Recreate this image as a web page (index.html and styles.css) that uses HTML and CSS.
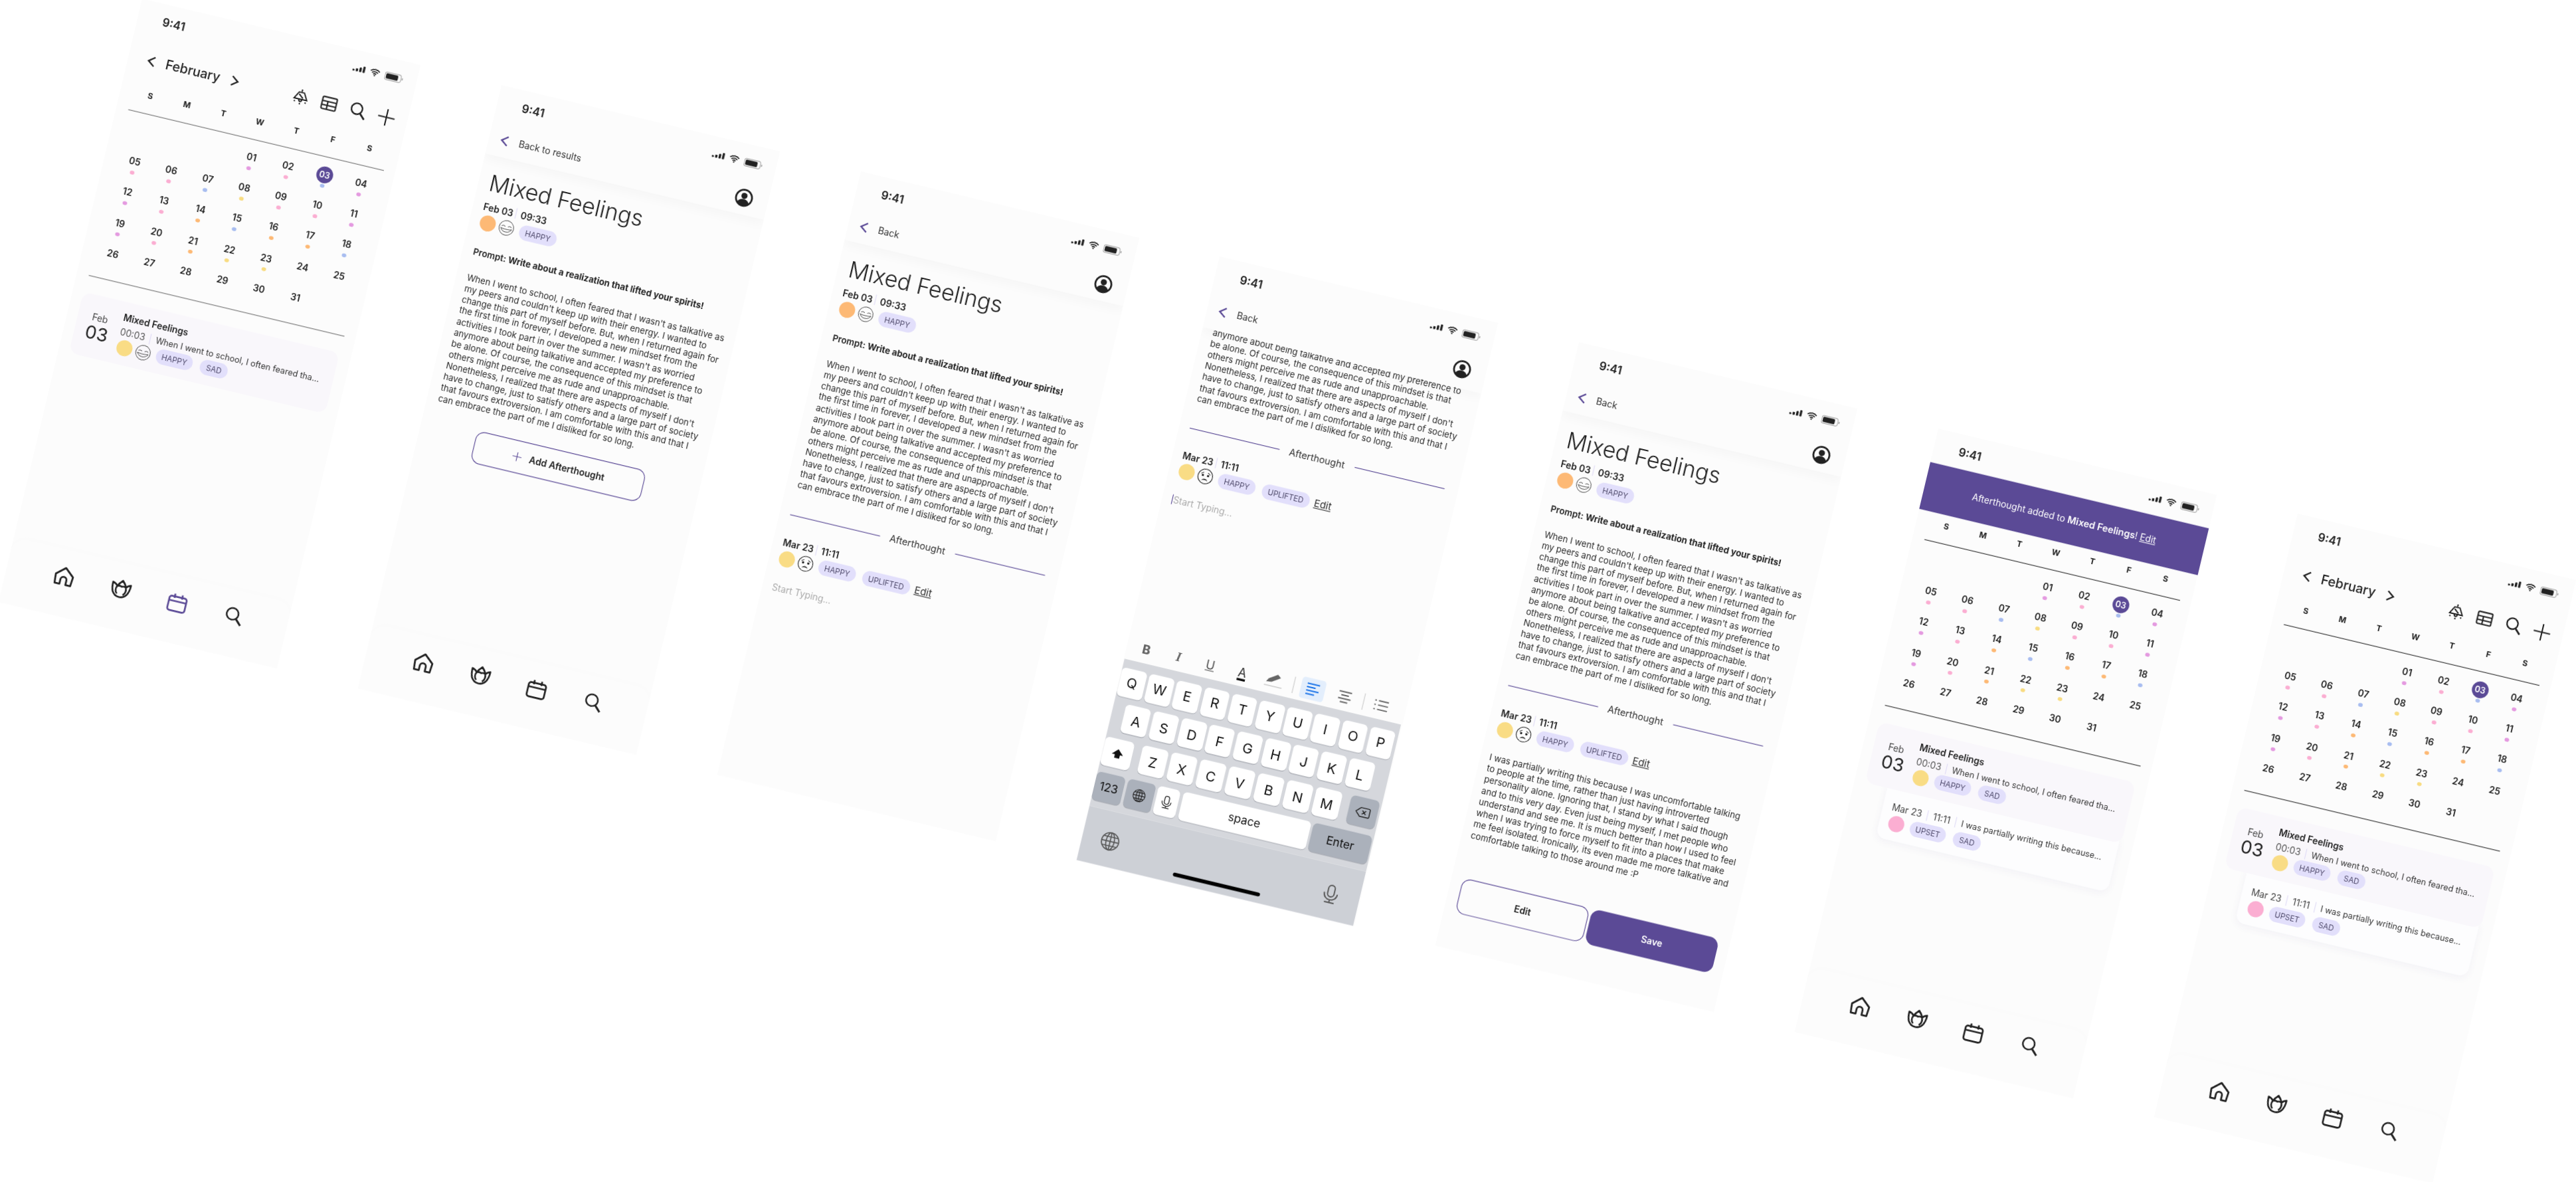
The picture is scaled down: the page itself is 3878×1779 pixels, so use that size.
FILE: index.html
```html
<!DOCTYPE html>
<html lang="en">
<head>
<meta charset="utf-8">
<title>Mixed Feelings journal screens</title>
<link rel="stylesheet" href="styles.css">
</head>
<body>
<svg class="defs" width="0" height="0" aria-hidden="true">
  <symbol id="i-signal" viewBox="0 0 17 10"><rect x="0" y="6.4" width="3" height="2.6" rx="1"/><rect x="4.6" y="5" width="3" height="4" rx="1"/><rect x="9.2" y="2.8" width="3" height="6.2" rx="1"/><rect x="13.8" y="0.6" width="3" height="8.4" rx="1"/></symbol>
  <symbol id="i-wifi" viewBox="0 0 15 11"><path d="M1 3.8a9.4 9.4 0 0 1 13 0M3.2 6a6.2 6.2 0 0 1 8.6 0M5.4 8.1a3 3 0 0 1 4.2 0" fill="none" stroke="currentColor" stroke-width="1.5"/><circle cx="7.5" cy="9.8" r="1"/></symbol>
  <symbol id="i-batt" viewBox="0 0 25 11"><rect x=".5" y=".5" width="21.5" height="10" rx="3" fill="none" stroke="#aaa" stroke-width="1"/><rect x="2" y="2" width="16" height="7" rx="1.6"/><rect x="23" y="4" width="1.5" height="3" rx=".7" fill="#aaa"/></symbol>
  <symbol id="i-left" viewBox="0 0 12 16"><path d="M10 2 2 8l8 6" fill="none" stroke="currentColor" stroke-width="2"/></symbol>
  <symbol id="i-right" viewBox="0 0 12 16"><path d="M2 2l8 6-8 6" fill="none" stroke="currentColor" stroke-width="2"/></symbol>
  <symbol id="i-bell" viewBox="0 0 24 24"><path d="M12 2v3M8.5 6h7l5 9H3.500zM9 8.500l6 5M10 15a2 3 0 0 0 4 0" fill="none" stroke="currentColor" stroke-width="1.700"/><path d="M4 19l1.500-1M20 19l-1.500-1M12 22v-2" stroke="currentColor" stroke-width="1.700"/></symbol>
  <symbol id="i-table" viewBox="0 0 24 24"><rect x="2.500" y="4" width="19" height="16" rx="1.500" fill="none" stroke="currentColor" stroke-width="1.800"/><path d="M2.500 9.500h19M2.500 14.800h19M10 9.500V20" fill="none" stroke="currentColor" stroke-width="1.800"/></symbol>
  <symbol id="i-search" viewBox="0 0 24 24"><circle cx="10" cy="10" r="7.200" fill="none" stroke="currentColor" stroke-width="2"/><path d="M15.400 15.400 22 22" fill="none" stroke="currentColor" stroke-width="2.400"/></symbol>
  <symbol id="i-plus" viewBox="0 0 24 24"><path d="M12 1v22M1 12h22" fill="none" stroke="currentColor" stroke-width="1.800"/></symbol>
  <symbol id="i-profile" viewBox="0 0 24 24"><circle cx="12" cy="12" r="10.500" fill="none" stroke="currentColor" stroke-width="2.400"/><circle cx="12" cy="9.500" r="4"/><path d="M4 19c2-4 5-5.200 8-5.200s6 1.200 8 5.200c-2 2.400-5 3.500-8 3.500s-6-1.100-8-3.500z"/></symbol>
  <symbol id="i-home" viewBox="0 0 28 28"><path d="M2.500 13 14 3l11.500 10-1 12h-6.500v-6a4 4 0 0 0-8 0v6H3.500z" fill="none" stroke="currentColor" stroke-width="2.400" stroke-linejoin="round"/></symbol>
  <symbol id="i-tulip" viewBox="0 0 28 28"><path d="M2 6c3 .5 5 2 6.500 4C10 7 12 4.500 14.500 2 17 4.500 19 7 20 10c1.500-2 3.500-3.500 6-4 0 5-.5 9-3 13-2 3-5 5-9 5-5 0-8-2.500-10-6C2.500 14.500 2 10 2 6z" fill="none" stroke="currentColor" stroke-width="2.300" stroke-linejoin="round"/><path d="M8.500 10C6.500 14 7.500 18 10 20M20 10c1.500 4 .5 8-2 10.500M8.500 10C11 9 13 9 14.500 10c2-1 4-1 5.500 0" fill="none" stroke="currentColor" stroke-width="2.300"/></symbol>
  <symbol id="i-cal" viewBox="0 0 28 28"><rect x="2.500" y="6" width="23" height="19" rx="3" fill="none" stroke="currentColor" stroke-width="2.300"/><path d="M2.500 12h23M9 2.500V8M19 2.500V8" fill="none" stroke="currentColor" stroke-width="2.300"/></symbol>
  <symbol id="i-smile" viewBox="0 0 24 24"><circle cx="12" cy="12" r="11" fill="none" stroke="currentColor" stroke-width=".8"/><path d="M4.500 10q2.800-2.200 5.600 0M13.900 10q2.800-2.200 5.600 0M3.800 13c2.200 7 14.200 7 16.400 0-3 1.500-13.400 1.500-16.400 0z" fill="none" stroke="currentColor" stroke-width=".8"/></symbol>
  <symbol id="i-sad" viewBox="0 0 24 24"><circle cx="12" cy="12" r="11" fill="none" stroke="currentColor" stroke-width="1"/><path d="M5 8.500 9 6M19 8.500 15 6" fill="none" stroke="currentColor" stroke-width="1"/><circle cx="8" cy="10.500" r="1.700"/><circle cx="16" cy="10.500" r="1.700"/><path d="M7.500 18.500c1.500-4 7.500-4 9 0-3-1.500-6-1.500-9 0z"/></symbol>
  <symbol id="i-globe" viewBox="0 0 24 24"><g fill="none" stroke="currentColor" stroke-width="1.300"><circle cx="12" cy="12" r="10.500"/><ellipse cx="12" cy="12" rx="5" ry="10.500"/><path d="M12 1.500v21M1.500 12h21M3 6.500h18M3 17.500h18"/></g></symbol>
  <symbol id="i-mic" viewBox="0 0 24 24"><g fill="none" stroke="currentColor" stroke-width="1.500"><rect x="8" y="1.500" width="8" height="14" rx="4"/><path d="M4 11c0 11 16 11 16 0M12 19v3.500M6 22.500h12"/></g></symbol>
  <symbol id="i-shift" viewBox="0 0 24 24"><path d="M12 4 2 14h5.500v6h9v-6H22z"/></symbol>
  <symbol id="i-back" viewBox="0 0 24 18"><path d="M8 2h13a2 2 0 0 1 2 2v10a2 2 0 0 1-2 2H8l-7-7zM11 6l6 6M17 6l-6 6" fill="none" stroke="currentColor" stroke-width="1.500"/></symbol>
  <symbol id="i-pen" viewBox="0 0 28 22"><path d="M3 15l3-5L18 2l5 4-12 8z"/><path d="M1 20h26" stroke="#ccc" stroke-width="1.500"/></symbol>
  <symbol id="i-alignl" viewBox="0 0 24 24"><path d="M2 4h20M2 9.500h14M2 15h20M2 20.500h14" fill="none" stroke="currentColor" stroke-width="2"/></symbol>
  <symbol id="i-alignc" viewBox="0 0 24 24"><path d="M2 4h20M6 9.500h12M2 15h20M6 20.500h12" fill="none" stroke="currentColor" stroke-width="2"/></symbol>
  <symbol id="i-list" viewBox="0 0 24 24"><path d="M7 5h16M7 12h16M7 19h16M1 5h2.500M1 12h2.500M1 19h2.500" fill="none" stroke="currentColor" stroke-width="2"/></symbol>
</svg>

<main class="canvas">

<!-- Screen 1: calendar -->
<section class="phone p1">
  <div class="status"><span class="time">9:41</span><div class="sys"><svg class="s-signal"><use href="#i-signal"/></svg><svg class="s-wifi"><use href="#i-wifi"/></svg><svg class="s-batt"><use href="#i-batt"/></svg></div></div>
  <div class="cal-head">
    <svg class="chev"><use href="#i-left"/></svg><span class="month">February</span><svg class="chev chev-r"><use href="#i-right"/></svg>
    <div class="tools"><svg class="tool"><use href="#i-bell"/></svg><svg class="tool"><use href="#i-table"/></svg><svg class="tool"><use href="#i-search"/></svg><svg class="tool"><use href="#i-plus"/></svg></div>
  </div>
  <div class="days"><span>S</span><span>M</span><span>T</span><span>W</span><span>T</span><span>F</span><span>S</span></div>
  <div class="dates">
    <div></div><div></div><div></div>
    <div class="d"><b>01</b><i class="dot m"></i></div><div class="d"><b>02</b><i class="dot p"></i></div><div class="d today"><b>03</b><i class="dot bl"></i></div><div class="d"><b>04</b><i class="dot m"></i></div>
    <div class="d"><b>05</b><i class="dot p"></i></div><div class="d"><b>06</b><i class="dot p"></i></div><div class="d"><b>07</b><i class="dot bl"></i></div><div class="d"><b>08</b><i class="dot y"></i></div><div class="d"><b>09</b><i class="dot p"></i></div><div class="d"><b>10</b><i class="dot p"></i></div><div class="d"><b>11</b><i class="dot m"></i></div>
    <div class="d"><b>12</b><i class="dot m"></i></div><div class="d"><b>13</b><i class="dot p"></i></div><div class="d"><b>14</b><i class="dot o"></i></div><div class="d"><b>15</b><i class="dot bl"></i></div><div class="d"><b>16</b><i class="dot o"></i></div><div class="d"><b>17</b><i class="dot o"></i></div><div class="d"><b>18</b><i class="dot bl"></i></div>
    <div class="d"><b>19</b><i class="dot m"></i></div><div class="d"><b>20</b><i class="dot p"></i></div><div class="d"><b>21</b><i class="dot o"></i></div><div class="d"><b>22</b><i class="dot y"></i></div><div class="d"><b>23</b><i class="dot y"></i></div><div class="d"><b>24</b></div><div class="d"><b>25</b></div>
    <div class="d"><b>26</b></div><div class="d"><b>27</b></div><div class="d"><b>28</b></div><div class="d"><b>29</b></div><div class="d"><b>30</b></div><div class="d"><b>31</b></div>
  </div>
  <article class="card">
    <div class="card-date"><span class="cd-mon">Feb</span><span class="cd-day">03</span></div>
    <div class="card-body">
      <div class="card-title">Mixed Feelings</div>
      <div class="card-meta"><span class="cm-time">00:03</span><i class="sep"></i><span class="snippet">When I went to school, I often feared tha...</span></div>
      <div class="card-tags"><i class="mood yellow"></i><svg class="face"><use href="#i-smile"/></svg><span class="chip chip-first">HAPPY</span><span class="chip">SAD</span></div>
    </div>
  </article>
  <nav class="nav"><div class="ni"><svg><use href="#i-home"/></svg></div><div class="ni"><svg><use href="#i-tulip"/></svg></div><div class="ni active"><svg><use href="#i-cal"/></svg></div><div class="ni"><svg class="ni-s"><use href="#i-search"/></svg></div></nav>
</section>

<!-- Screen 2: entry -->
<section class="phone p2">
  <header class="top">
    <div class="status"><span class="time">9:41</span><div class="sys"><svg class="s-signal"><use href="#i-signal"/></svg><svg class="s-wifi"><use href="#i-wifi"/></svg><svg class="s-batt"><use href="#i-batt"/></svg></div></div>
    <div class="backrow"><svg class="chev purple"><use href="#i-left"/></svg><span class="backtxt">Back to results</span><svg class="profile"><use href="#i-profile"/></svg></div>
  </header>
  <h1 class="title">Mixed Feelings</h1>
  <div class="meta"><span class="md">Feb 03</span><i class="sep"></i><span class="mt">09:33</span></div>
  <div class="moods"><i class="mood orange"></i><svg class="face"><use href="#i-smile"/></svg><span class="chip chip-first">HAPPY</span></div>
  <p class="prompt">Prompt: <b>Write about a realization that lifted your spirits!</b></p>
  <p class="body">When I went to school, I often feared that I wasn't as talkative as<br>my peers and couldn't keep up with their energy. I wanted to<br>change this part of myself before. But, when I returned again for<br>the first time in forever, I developed a new mindset from the<br>activities I took part in over the summer. I wasn't as worried<br>anymore about being talkative and accepted my preference to<br>be alone. Of course, the consequence of this mindset is that<br>others might perceive me as rude and unapproachable.<br>Nonetheless, I realized that there are aspects of myself I don't<br>have to change, just to satisfy others and a large part of society<br>that favours extroversion. I am comfortable with this and that I<br>can embrace the part of me I disliked for so long.</p>
  <button class="add"><svg class="add-plus"><use href="#i-plus"/></svg><span>Add Afterthought</span></button>
  <nav class="nav"><div class="ni"><svg><use href="#i-home"/></svg></div><div class="ni"><svg><use href="#i-tulip"/></svg></div><div class="ni"><svg><use href="#i-cal"/></svg></div><div class="ni"><svg class="ni-s"><use href="#i-search"/></svg></div></nav>
</section>

<!-- Screen 3: afterthought, empty -->
<section class="phone p3">
  <header class="top">
    <div class="status"><span class="time">9:41</span><div class="sys"><svg class="s-signal"><use href="#i-signal"/></svg><svg class="s-wifi"><use href="#i-wifi"/></svg><svg class="s-batt"><use href="#i-batt"/></svg></div></div>
    <div class="backrow"><svg class="chev purple"><use href="#i-left"/></svg><span class="backtxt">Back</span><svg class="profile"><use href="#i-profile"/></svg></div>
  </header>
  <h1 class="title">Mixed Feelings</h1>
  <div class="meta"><span class="md">Feb 03</span><i class="sep"></i><span class="mt">09:33</span></div>
  <div class="moods"><i class="mood orange"></i><svg class="face"><use href="#i-smile"/></svg><span class="chip chip-first">HAPPY</span></div>
  <p class="prompt">Prompt: <b>Write about a realization that lifted your spirits!</b></p>
  <p class="body">When I went to school, I often feared that I wasn't as talkative as<br>my peers and couldn't keep up with their energy. I wanted to<br>change this part of myself before. But, when I returned again for<br>the first time in forever, I developed a new mindset from the<br>activities I took part in over the summer. I wasn't as worried<br>anymore about being talkative and accepted my preference to<br>be alone. Of course, the consequence of this mindset is that<br>others might perceive me as rude and unapproachable.<br>Nonetheless, I realized that there are aspects of myself I don't<br>have to change, just to satisfy others and a large part of society<br>that favours extroversion. I am comfortable with this and that I<br>can embrace the part of me I disliked for so long.</p>
  <div class="after"><i></i><span>Afterthought</span><i></i></div>
  <div class="meta meta-after"><span class="md">Mar 23</span><i class="sep"></i><span class="mt">11:11</span></div>
  <div class="moods moods-after"><i class="mood yellow"></i><svg class="face"><use href="#i-sad"/></svg><span class="chip chip-first">HAPPY</span><span class="chip chip-a">UPLIFTED</span><a class="edit">Edit</a></div>
  <p class="typing">Start Typing...</p>
</section>

<!-- Screen 4: afterthought with keyboard -->
<section class="phone p4">
  <header class="top">
    <div class="status"><span class="time">9:41</span><div class="sys"><svg class="s-signal"><use href="#i-signal"/></svg><svg class="s-wifi"><use href="#i-wifi"/></svg><svg class="s-batt"><use href="#i-batt"/></svg></div></div>
    <div class="backrow"><svg class="chev purple"><use href="#i-left"/></svg><span class="backtxt">Back</span><svg class="profile"><use href="#i-profile"/></svg></div>
  </header>
  <p class="body body-scrolled">anymore about being talkative and accepted my preference to<br>be alone. Of course, the consequence of this mindset is that<br>others might perceive me as rude and unapproachable.<br>Nonetheless, I realized that there are aspects of myself I don't<br>have to change, just to satisfy others and a large part of society<br>that favours extroversion. I am comfortable with this and that I<br>can embrace the part of me I disliked for so long.</p>
  <div class="after"><i></i><span>Afterthought</span><i></i></div>
  <div class="meta meta-after"><span class="md">Mar 23</span><i class="sep"></i><span class="mt">11:11</span></div>
  <div class="moods moods-after"><i class="mood yellow"></i><svg class="face"><use href="#i-sad"/></svg><span class="chip chip-first">HAPPY</span><span class="chip chip-a">UPLIFTED</span><a class="edit">Edit</a></div>
  <p class="typing"><i class="caret"></i>Start Typing...</p>
  <div class="kbd">
    <div class="tbar">
      <span class="tb t-b">B</span><span class="tb t-i">I</span><span class="tb t-u">U</span><span class="tb t-a">A</span><span class="tb"><svg class="tb-pen"><use href="#i-pen"/></svg></span>
      <i class="tb-sep"></i>
      <span class="tb"><span class="tb-on"><svg class="tb-ic"><use href="#i-alignl"/></svg></span></span><span class="tb"><svg class="tb-ic grey"><use href="#i-alignc"/></svg></span>
      <i class="tb-sep s2"></i>
      <span class="tb tb-last"><svg class="tb-ic grey"><use href="#i-list"/></svg></span>
    </div>
    <div class="keys">
      <div class="krow r1"><span class="key">Q</span><span class="key">W</span><span class="key">E</span><span class="key">R</span><span class="key">T</span><span class="key">Y</span><span class="key">U</span><span class="key">I</span><span class="key">O</span><span class="key">P</span></div>
      <div class="krow r2"><span class="key">A</span><span class="key">S</span><span class="key">D</span><span class="key">F</span><span class="key">G</span><span class="key">H</span><span class="key">J</span><span class="key">K</span><span class="key">L</span></div>
      <div class="krow r3"><span class="key k-shift"><svg class="k-ic"><use href="#i-shift"/></svg></span><span class="key">Z</span><span class="key">X</span><span class="key">C</span><span class="key">V</span><span class="key">B</span><span class="key">N</span><span class="key">M</span><span class="key k-del"><svg class="k-ic2"><use href="#i-back"/></svg></span></div>
      <div class="krow r4"><span class="key kw1 fn">123</span><span class="key kw2 fn"><svg class="k-ic"><use href="#i-globe"/></svg></span><span class="key kw3"><svg class="k-ic"><use href="#i-mic"/></svg></span><span class="key kw4 ksmall">space</span><span class="key kw5 fn ksmall">Enter</span></div>
    </div>
    <div class="kbottom"><svg class="kb-ic"><use href="#i-globe"/></svg><i class="indicator"></i><svg class="kb-ic"><use href="#i-mic"/></svg></div>
  </div>
</section>

<!-- Screen 5: afterthought filled -->
<section class="phone p5">
  <header class="top">
    <div class="status"><span class="time">9:41</span><div class="sys"><svg class="s-signal"><use href="#i-signal"/></svg><svg class="s-wifi"><use href="#i-wifi"/></svg><svg class="s-batt"><use href="#i-batt"/></svg></div></div>
    <div class="backrow"><svg class="chev purple"><use href="#i-left"/></svg><span class="backtxt">Back</span><svg class="profile"><use href="#i-profile"/></svg></div>
  </header>
  <h1 class="title">Mixed Feelings</h1>
  <div class="meta"><span class="md">Feb 03</span><i class="sep"></i><span class="mt">09:33</span></div>
  <div class="moods"><i class="mood orange"></i><svg class="face"><use href="#i-smile"/></svg><span class="chip chip-first">HAPPY</span></div>
  <p class="prompt">Prompt: <b>Write about a realization that lifted your spirits!</b></p>
  <p class="body">When I went to school, I often feared that I wasn't as talkative as<br>my peers and couldn't keep up with their energy. I wanted to<br>change this part of myself before. But, when I returned again for<br>the first time in forever, I developed a new mindset from the<br>activities I took part in over the summer. I wasn't as worried<br>anymore about being talkative and accepted my preference to<br>be alone. Of course, the consequence of this mindset is that<br>others might perceive me as rude and unapproachable.<br>Nonetheless, I realized that there are aspects of myself I don't<br>have to change, just to satisfy others and a large part of society<br>that favours extroversion. I am comfortable with this and that I<br>can embrace the part of me I disliked for so long.</p>
  <div class="after"><i></i><span>Afterthought</span><i></i></div>
  <div class="meta meta-after"><span class="md">Mar 23</span><i class="sep"></i><span class="mt">11:11</span></div>
  <div class="moods moods-after"><i class="mood yellow"></i><svg class="face"><use href="#i-sad"/></svg><span class="chip chip-first">HAPPY</span><span class="chip chip-a">UPLIFTED</span><a class="edit">Edit</a></div>
  <p class="body body-after">I was partially writing this because I was uncomfortable talking<br>to people at the time, rather than just having introverted<br>personality alone. Ignoring that, I stand by what I said though<br>and to this very day. Even just being myself, I met people who<br>understand and see me. It is much better than how I used to feel<br>when I was trying to force myself to fit into a places that make<br>me feel isolated. Ironically, its even made me more talkative and<br>comfortable talking to those around me :P</p>
  <div class="actions"><button class="btn-edit">Edit</button><button class="btn-save">Save</button></div>
</section>

<!-- Screen 6: calendar with banner -->
<section class="phone p6">
  <div class="status"><span class="time">9:41</span><div class="sys"><svg class="s-signal"><use href="#i-signal"/></svg><svg class="s-wifi"><use href="#i-wifi"/></svg><svg class="s-batt"><use href="#i-batt"/></svg></div></div>
  <div class="banner"><span>Afterthought added to <b>Mixed Feelings</b>! <u>Edit</u></span></div>
  <div class="days"><span>S</span><span>M</span><span>T</span><span>W</span><span>T</span><span>F</span><span>S</span></div>
  <div class="dates">
    <div></div><div></div><div></div>
    <div class="d"><b>01</b><i class="dot m"></i></div><div class="d"><b>02</b><i class="dot p"></i></div><div class="d today"><b>03</b><i class="dot bl"></i></div><div class="d"><b>04</b><i class="dot m"></i></div>
    <div class="d"><b>05</b><i class="dot p"></i></div><div class="d"><b>06</b><i class="dot p"></i></div><div class="d"><b>07</b><i class="dot bl"></i></div><div class="d"><b>08</b><i class="dot y"></i></div><div class="d"><b>09</b><i class="dot p"></i></div><div class="d"><b>10</b><i class="dot p"></i></div><div class="d"><b>11</b><i class="dot m"></i></div>
    <div class="d"><b>12</b><i class="dot m"></i></div><div class="d"><b>13</b><i class="dot p"></i></div><div class="d"><b>14</b><i class="dot o"></i></div><div class="d"><b>15</b><i class="dot bl"></i></div><div class="d"><b>16</b><i class="dot o"></i></div><div class="d"><b>17</b><i class="dot o"></i></div><div class="d"><b>18</b><i class="dot bl"></i></div>
    <div class="d"><b>19</b><i class="dot m"></i></div><div class="d"><b>20</b><i class="dot p"></i></div><div class="d"><b>21</b><i class="dot o"></i></div><div class="d"><b>22</b><i class="dot y"></i></div><div class="d"><b>23</b><i class="dot y"></i></div><div class="d"><b>24</b></div><div class="d"><b>25</b></div>
    <div class="d"><b>26</b></div><div class="d"><b>27</b></div><div class="d"><b>28</b></div><div class="d"><b>29</b></div><div class="d"><b>30</b></div><div class="d"><b>31</b></div>
  </div>
  <article class="card">
    <div class="card-date"><span class="cd-mon">Feb</span><span class="cd-day">03</span></div>
    <div class="card-body">
      <div class="card-title">Mixed Feelings</div>
      <div class="card-meta"><span class="cm-time">00:03</span><i class="sep"></i><span class="snippet">When I went to school, I often feared tha...</span></div>
      <div class="card-tags"><i class="mood yellow"></i><span class="chip chip-first">HAPPY</span><span class="chip">SAD</span></div>
    </div>
  </article>
  <article class="sub">
    <div class="card-meta"><span class="sub-date">Mar 23</span><i class="sep"></i><span class="sub-time">11:11</span><i class="sep"></i><span class="snippet">I was partially writing this because...</span></div>
    <div class="card-tags"><i class="mood pink"></i><span class="chip chip-first">UPSET</span><span class="chip">SAD</span></div>
  </article>
  <nav class="nav"><div class="ni"><svg><use href="#i-home"/></svg></div><div class="ni"><svg><use href="#i-tulip"/></svg></div><div class="ni"><svg><use href="#i-cal"/></svg></div><div class="ni"><svg class="ni-s"><use href="#i-search"/></svg></div></nav>
</section>

<!-- Screen 7: calendar with afterthought -->
<section class="phone p7">
  <div class="status"><span class="time">9:41</span><div class="sys"><svg class="s-signal"><use href="#i-signal"/></svg><svg class="s-wifi"><use href="#i-wifi"/></svg><svg class="s-batt"><use href="#i-batt"/></svg></div></div>
  <div class="cal-head">
    <svg class="chev"><use href="#i-left"/></svg><span class="month">February</span><svg class="chev chev-r"><use href="#i-right"/></svg>
    <div class="tools"><svg class="tool"><use href="#i-bell"/></svg><svg class="tool"><use href="#i-table"/></svg><svg class="tool"><use href="#i-search"/></svg><svg class="tool"><use href="#i-plus"/></svg></div>
  </div>
  <div class="days"><span>S</span><span>M</span><span>T</span><span>W</span><span>T</span><span>F</span><span>S</span></div>
  <div class="dates">
    <div></div><div></div><div></div>
    <div class="d"><b>01</b><i class="dot m"></i></div><div class="d"><b>02</b><i class="dot p"></i></div><div class="d today"><b>03</b><i class="dot bl"></i></div><div class="d"><b>04</b><i class="dot m"></i></div>
    <div class="d"><b>05</b><i class="dot p"></i></div><div class="d"><b>06</b><i class="dot p"></i></div><div class="d"><b>07</b><i class="dot bl"></i></div><div class="d"><b>08</b><i class="dot y"></i></div><div class="d"><b>09</b><i class="dot p"></i></div><div class="d"><b>10</b><i class="dot p"></i></div><div class="d"><b>11</b><i class="dot m"></i></div>
    <div class="d"><b>12</b><i class="dot m"></i></div><div class="d"><b>13</b><i class="dot p"></i></div><div class="d"><b>14</b><i class="dot o"></i></div><div class="d"><b>15</b><i class="dot bl"></i></div><div class="d"><b>16</b><i class="dot o"></i></div><div class="d"><b>17</b><i class="dot o"></i></div><div class="d"><b>18</b><i class="dot bl"></i></div>
    <div class="d"><b>19</b><i class="dot m"></i></div><div class="d"><b>20</b><i class="dot p"></i></div><div class="d"><b>21</b><i class="dot o"></i></div><div class="d"><b>22</b><i class="dot y"></i></div><div class="d"><b>23</b><i class="dot y"></i></div><div class="d"><b>24</b></div><div class="d"><b>25</b></div>
    <div class="d"><b>26</b></div><div class="d"><b>27</b></div><div class="d"><b>28</b></div><div class="d"><b>29</b></div><div class="d"><b>30</b></div><div class="d"><b>31</b></div>
  </div>
  <article class="card">
    <div class="card-date"><span class="cd-mon">Feb</span><span class="cd-day">03</span></div>
    <div class="card-body">
      <div class="card-title">Mixed Feelings</div>
      <div class="card-meta"><span class="cm-time">00:03</span><i class="sep"></i><span class="snippet">When I went to school, I often feared tha...</span></div>
      <div class="card-tags"><i class="mood yellow"></i><span class="chip chip-first">HAPPY</span><span class="chip">SAD</span></div>
    </div>
  </article>
  <article class="sub">
    <div class="card-meta"><span class="sub-date">Mar 23</span><i class="sep"></i><span class="sub-time">11:11</span><i class="sep"></i><span class="snippet">I was partially writing this because...</span></div>
    <div class="card-tags"><i class="mood pink"></i><span class="chip chip-first">UPSET</span><span class="chip">SAD</span></div>
  </article>
  <nav class="nav"><div class="ni"><svg><use href="#i-home"/></svg></div><div class="ni"><svg><use href="#i-tulip"/></svg></div><div class="ni"><svg><use href="#i-cal"/></svg></div><div class="ni"><svg class="ni-s"><use href="#i-search"/></svg></div></nav>
</section>

</main>
</body>
</html>
```
FILE: styles.css
```css
* { box-sizing: border-box; }
html, body { margin: 0; padding: 0; background: #fff; }
.defs { position: absolute; }
.canvas { position: relative; width: 3878px; height: 1779px; overflow: hidden; background: #fff; }

/* free canvas: each screen is a rotated artboard */
.phone {
  --purple: #5b4a96;
  --line: #333;
  position: absolute;
  width: 375px;
  height: 812px;
  display: flex;
  flex-direction: column;
  transform-origin: 0 0;
  transform: matrix(1.1186, .2665, -.2665, 1.1186, 0, 0);
  filter: blur(.4px);
  background: #fcfcfc;
  font-family: Inter, "Liberation Sans", sans-serif;
  color: #222;
  overflow: hidden;
}
.p1 { left: 214.3px; top: -1.7px; --line: #777; }
.p2 { left: 755.2px; top: 127.6px; }
.p3 { left: 1295.8px; top: 257.6px; }
.p4 { left: 1836.4px; top: 385.7px; }
.p5 { left: 2377.2px; top: 515.2px; }
.p6 { left: 2918px; top: 645.2px; }
.p7 { left: 3458.5px; top: 773.1px; }

/* status bar */
.status { height: 47px; flex: none; display: flex; align-items: center; justify-content: space-between; padding: 0 18px 0 33px; }
.time { font-size: 15px; font-weight: 600; color: #222; }
.sys { display: flex; align-items: center; gap: 6px; fill: #222; color: #222; }
.s-signal { width: 17px; height: 11px; }
.s-wifi { width: 14px; height: 11px; }
.s-batt { width: 25px; height: 12px; }

/* calendar */
.cal-head { height: 60px; flex: none; display: flex; align-items: center; padding: 0 16px 0 25px; }
.chev { width: 12px; height: 16px; color: #222; flex: none; }
.chev-r { margin-left: 14px; }
.month { width: 73px; margin-left: 13px; font-size: 17px; font-weight: 500; white-space: nowrap; }
.tools { margin-left: auto; display: flex; gap: 14.5px; color: #222; }
.tool { width: 24px; height: 24px; }
.days { flex: none; height: 39px; padding-bottom: 9px; margin: 0 15.5px; display: grid; grid-template-columns: repeat(7, 1fr); align-items: center; justify-items: center; border-bottom: 1px solid var(--line); font-size: 10.5px; font-weight: 700; }
.p6 .days { height: 38px; padding-bottom: 8px; }
.dates { flex: none; margin: 0 15.5px; padding-top: 16px; display: grid; grid-template-columns: repeat(7, 1fr); grid-auto-rows: 41.2px; border-bottom: 1px solid var(--line); }
.d { display: flex; flex-direction: column; align-items: center; }
.d b { display: block; height: 14px; line-height: 14px; font-size: 12px; font-weight: 600; }
.today b { width: 22px; height: 22px; line-height: 22px; margin: -4px 0; border-radius: 50%; background: var(--purple); color: #fff; text-align: center; font-size: 11px; }
.dot { display: block; width: 6px; height: 5px; margin-top: 5px; border-radius: 50%; }
.today .dot { margin-top: 5px; }
.dot.p { background: #fbaed2; }
.dot.m { background: #e49ae0; }
.dot.bl { background: #a8bdf0; }
.dot.y { background: #f8dc82; }
.dot.o { background: #fdb975; }

.card { position: relative; z-index: 1; flex: none; display: flex; width: 345px; height: 82px; margin: 22px 0 0 14px; border-radius: 12px; background: #f9f7fb; }
.card-date { width: 59px; padding-top: 21px; display: flex; flex-direction: column; align-items: center; }
.cd-mon { font-size: 12px; line-height: 15px; color: #444; }
.cd-day { font-size: 24px; line-height: 27px; font-weight: 400; }
.card-body { padding-top: 13px; min-width: 0; }
.card-title { font-size: 12px; line-height: 16px; font-weight: 600; white-space: nowrap; }
.card-meta { display: flex; align-items: center; height: 18px; margin-top: 2px; white-space: nowrap; }
.cm-time { width: 32px; font-size: 12px; color: #555; }
.sep { display: block; flex: none; width: 1px; height: 14px; margin: 0 7px 0 8px; background: #e0dcf6; }
.snippet { font-size: 11px; color: #333; }
.card-tags { display: flex; align-items: center; height: 21px; }
.mood { display: block; flex: none; width: 21px; height: 21px; border-radius: 50%; }
.mood.yellow { background: #f9dc85; }
.mood.orange { background: #fdb975; }
.mood.pink { background: #fbaed2; }
.face { flex: none; width: 21px; height: 21px; margin-left: 4px; color: #222; fill: #222; }
.chip { flex: none; height: 20px; line-height: 20px; padding: 0 8px; margin-left: 10px; border-radius: 10px; background: #e2dffb; font-size: 10px; color: #4f4a6b; white-space: nowrap; }
.chip-first { margin-left: 6.5px; }
.card-tags .mood + .chip-first { margin-left: 7.5px; }
.sub { flex: none; width: 312px; height: 77px; margin: -11px 0 0 44px; padding: 25px 0 0 12px; border-radius: 12px; background: #fdfdfe; box-shadow: 0 3px 10px rgba(80, 60, 140, .05); }
.sub .card-meta { margin-top: 0; }
.sub .sep { margin: 0 7px; }
.sub-date { font-size: 12px; color: #444; }
.sub-time { font-size: 12px; color: #444; }
.sub .card-tags { margin-top: 1.2px; }

/* bottom nav */
.nav { flex: none; margin-top: auto; height: 88px; padding: 21px 0 0 38px; display: flex; border-radius: 20px 20px 0 0; box-shadow: 0 -2px 8px rgba(0, 0, 0, .012); color: #222; }
.ni { width: 76px; display: flex; justify-content: center; }
.ni svg { width: 28px; height: 28px; }
.ni .ni-s { width: 26px; height: 26px; }
.ni.active { color: var(--purple); }

/* entry */
.top { position: relative; z-index: 2; flex: none; height: 92px; background: #fcfcfc; box-shadow: 0 8px 12px rgba(0, 0, 0, .022); }
.p4 .top { height: 95px; }
.backrow { display: flex; align-items: center; height: 45px; padding: 0 20px 0 15px; }
.purple { color: var(--purple); }
.backtxt { margin-left: 13px; font-size: 12px; color: #333; }
.profile { width: 24px; height: 24px; margin-left: auto; color: #222; fill: #222; }
.title { flex: none; margin: 16.5px 0 0 14.5px; font-size: 29.5px; line-height: 36px; font-weight: 300; white-space: nowrap; color: #222; }
.meta { flex: none; display: flex; align-items: center; height: 16px; margin: 6.5px 0 0 14px; font-size: 12px; font-weight: 600; white-space: nowrap; }
.meta .sep { margin: 0 6px 0 7px; }
.md { width: 36px; }
.moods { flex: none; display: flex; align-items: center; height: 21px; margin: 3px 0 0 14px; }
.moods .chip-first { margin-left: 7px; }
.chip-a { margin-left: 9px; }
.prompt { flex: none; margin: 20.6px 0 0 14.6px; font-size: 11.5px; line-height: 16px; font-weight: 600; white-space: nowrap; }
.prompt b { font-weight: 700; }
.body { flex: none; margin: 20.4px 0 0 14.5px; font-size: 11.4px; line-height: 14.8px; color: #2a2a2a; white-space: nowrap; }
.body-scrolled { margin-top: -3.4px; }
.add { flex: none; display: flex; align-items: center; justify-content: center; width: 228px; height: 43px; margin: 21.4px 0 0 74px; border: 1px solid var(--purple); border-radius: 12px; background: transparent; font: 600 12px Inter, "Liberation Sans", sans-serif; color: #222; }
.add-plus { width: 13px; height: 13px; margin-right: 10px; color: var(--purple); }

.after { flex: none; display: flex; align-items: center; gap: 13px; height: 16px; width: 343.5px; margin: 25.4px 0 0 13.5px; font-size: 12.5px; color: #333; white-space: nowrap; }
.p4 .after { margin-top: 24.3px; }
.after i { flex: 1; height: 1px; background: var(--purple); }
.meta-after { margin-top: 21px; margin-left: 13.5px; }
.meta-after .md { width: 37px; }
.moods-after { margin-top: 2px; margin-left: 13px; }
.edit { margin-left: 6.5px; font-size: 13px; text-decoration: underline; color: #333; }
.typing { flex: none; margin: 21px 0 0 13px; font-size: 12px; line-height: 16px; color: #aaa; white-space: nowrap; }
.caret { display: inline-block; width: 1px; height: 13px; margin-right: 1px; vertical-align: -2px; background: var(--purple); }
.body-after { margin-top: 20.6px; margin-left: 12px; line-height: 15.1px; }

.actions { flex: none; display: flex; gap: 3px; margin: 48.3px 0 0 15px; }
.btn-edit, .btn-save { width: 171px; height: 47px; border-radius: 12px; font: 600 12px Inter, "Liberation Sans", sans-serif; }
.btn-edit { border: 1px solid var(--purple); background: transparent; color: #222; }
.btn-save { border: 0; background: var(--purple); color: #fff; }

.banner { flex: none; height: 63px; margin-top: -2px; display: flex; align-items: center; justify-content: center; background: var(--purple); color: #fff; font-size: 12px; white-space: nowrap; }
.banner b { font-size: 12.5px; font-weight: 600; }

/* keyboard */
.kbd { flex: none; margin: auto 0 0 1px; width: 372px; }
.tbar { height: 36px; display: flex; align-items: center; padding-left: 3.8px; color: #666; }
.tb { width: 43px; display: flex; justify-content: center; align-items: center; flex: none; font-size: 16px; }
.t-b { font-weight: 800; color: #666; }
.t-i { font: italic 700 17px "Liberation Serif", serif; }
.t-u { text-decoration: underline; color: #555; }
.t-a { color: #333; text-decoration: underline 3px #111; }
.tb-pen { width: 26px; height: 20px; fill: #666; }
.tb-sep { display: block; flex: none; width: 1px; height: 22px; margin: 0 4px; background: #ccc; }
.tb-sep.s2 { margin: 0 1px 0 3.7px; }
.tb-on { display: flex; padding: 4px 6px; border-radius: 4px; background: #e3eefc; color: #1a73e8; }
.tb-ic { width: 20px; height: 20px; }
.grey { color: #666; }
.keys { padding: 10.6px 0 9.2px; background: #d5d7dc; }
.krow { display: flex; height: 38px; margin-bottom: 8.7px; }
.krow:last-child { margin-bottom: 0; }
.key { display: flex; align-items: center; justify-content: center; flex: none; height: 38px; border-radius: 6px; background: #fff; box-shadow: 0 1px 0 #a6a9b0; font-size: 18px; color: #111; }
.r1 { gap: 3.5px; }
.r1 .key { width: 33.7px; }
.r2 { gap: 3.66px; padding-left: 16.4px; }
.r2 .key { width: 34px; }
.r3 { gap: 4px; }
.r3 .key { width: 35px; }
.r3 .k-shift { width: 39px; margin-right: 6.8px; }
.r3 .k-del { width: 38px; margin-left: 8px; background: #abb1bb; }
.k-ic { width: 18px; height: 18px; fill: #111; color: #222; }
.k-ic2 { width: 20px; height: 15px; color: #222; }
.r4 { gap: 3.5px; }
.kw1 { width: 38px; }
.kw2 { width: 37px; }
.kw3 { width: 30px; }
.kw4 { width: 172px; }
.kw5 { width: 79px; }
.fn { background: #abb1bb; }
.ksmall { font-size: 15px; }
.r4 .kw1 { font-size: 15px; }
.kbottom { position: relative; height: 73px; display: flex; align-items: flex-start; justify-content: space-between; padding: 25.5px 25px 0 24px; background: #cdd0d6; color: #555; }
.kb-ic { width: 26px; height: 26px; }
.indicator { position: absolute; left: 127px; bottom: 9.5px; width: 117px; height: 5px; border-radius: 3px; background: #000; }
```
